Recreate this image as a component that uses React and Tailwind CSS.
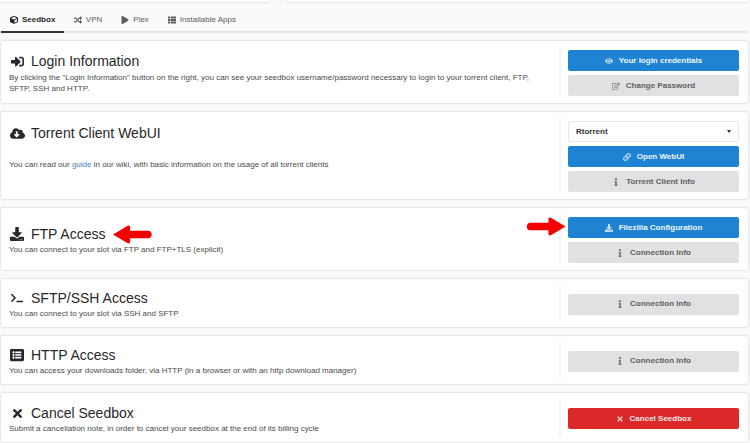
import {
  FaCube, FaRandom, FaPlay, FaThList, FaSignInAlt, FaCloudDownloadAlt, FaDownload,
  FaTerminal, FaListAlt, FaTimes, FaEye, FaRegEdit, FaLink, FaInfo,
} from 'react-icons/fa'

const tabs = [
  { label: 'Seedbox', Icon: FaCube, active: true },
  { label: 'VPN', Icon: FaRandom },
  { label: 'Plex', Icon: FaPlay },
  { label: 'Installable Apps', Icon: FaThList },
]

function Arrow({ className, flip }) {
  return (
    <svg viewBox="0 0 42 20" className={className}>
      <path
        d={flip
          ? 'M41 10 L26 1 C24 0 23 1 23 3 L23 6 L4 6 C-1 6 -1 14 4 14 L23 14 L23 17 C23 19 24 20 26 19 Z'
          : 'M1 10 L16 1 C18 0 19 1 19 3 L19 6 L38 6 C43 6 43 14 38 14 L19 14 L19 17 C19 19 18 20 16 19 Z'}
        fill="#f50000"
      />
    </svg>
  )
}

function Btn({ color = 'gray', Icon, children }) {
  const colors = {
    blue: 'bg-[#1f83d3] text-[#eef6fc]',
    gray: 'bg-[#e0e1e2] text-[#5f5f5f]',
    red: 'bg-[#db2828] text-[#fbeaea]',
  }
  return (
    <button className={`h-[21px] w-full flex items-center justify-center rounded-[2px] text-[8px] font-bold ${colors[color]}`}>
      <Icon className="mr-[6px] text-[8px] opacity-80" />
      {children}
    </button>
  )
}

function Card({ Icon, iconClass = '', title, height, children, actions, titleClass = '' }) {
  return (
    <div className={`flex rounded-[2px] bg-white shadow-[0_0_2px_rgba(34,36,38,0.3)] ${height}`}>
      <div className="w-[558px] shrink-0 pl-[8px] pr-[8px]">
        <div className={`flex items-center text-[#282828] ${titleClass}`}>
          <span className="w-[16px] flex shrink-0 justify-center mr-[6px]">
            <Icon className={iconClass} />
          </span>
          <h2 className="text-[14px] leading-[18px] font-normal">{title}</h2>
        </div>
        {children}
      </div>
      <div className="flex-1 my-[6px] border-l-2 border-[#f4f4f4] pt-[2px] pl-[7px] pr-[9px] flex flex-col justify-center gap-[4px]">
        {actions}
      </div>
    </div>
  )
}

const desc = 'text-[8px] leading-[11px] text-[#4a4a4a]'

export default function App() {
  return (
    <div className="h-[443px] w-[750px] overflow-hidden bg-[#fafafa] font-['Liberation_Sans',sans-serif] relative">
      {/* top of the section above */}
      <div className="flex h-[2px] pr-[2px] gap-[17px]">
        <div className="w-[270px] bg-white shadow-[0_0_2px_rgba(34,36,38,0.3)]" />
        <div className="flex-1 bg-white shadow-[0_0_2px_rgba(34,36,38,0.3)]" />
      </div>

      <div className="mt-[6px] mr-[2px] pl-[1px] flex h-[25px] border-b-2 border-[#e6e6e6]">
        {tabs.map(({ label, Icon, active }) => (
          <div
            key={label}
            className={`flex items-center text-[8px] ${
              active
                ? 'pl-[9px] pr-[9px] font-bold text-[#282828] border-b-2 border-[#333] h-[25px]'
                : 'px-[9.5px] text-[#5c5c5c] h-[23px]'
            }`}
          >
            <Icon className="mr-[4px] text-[8px]" />
            {label}
          </div>
        ))}
      </div>

      <div className="mt-[8px] ml-[1px] mr-[2px] flex flex-col gap-[9px]">
        <Card
          Icon={FaSignInAlt}
          iconClass="text-[13px]"
          title="Login Information"
          height="h-[62px]"
          titleClass="pt-[11px]"
          actions={
            <>
              <Btn color="blue" Icon={FaEye}>Your login credentials</Btn>
              <Btn Icon={FaRegEdit}>Change Password</Btn>
            </>
          }
        >
          <p className={`${desc} mt-[2px]`}>
            By clicking the "Login Information" button on the right, you can see your seedbox username/password necessary to login to your torrent client, FTP, SFTP, SSH and HTTP.
          </p>
        </Card>

        <Card
          Icon={FaCloudDownloadAlt}
          iconClass="text-[15px]"
          title="Torrent Client WebUI"
          height="h-[87px]"
          titleClass="pt-[12px]"
          actions={
            <>
              <div className="h-[21px] flex items-center justify-between rounded-[2px] border border-[#e8e8e8] pl-[7px] pr-[7px] text-[8px] font-bold text-[#333]">
                Rtorrent
                <span className="border-x-[2.5px] border-t-[3px] border-x-transparent border-t-[#333]" />
              </div>
              <Btn color="blue" Icon={FaLink}>Open WebUI</Btn>
              <Btn Icon={FaInfo}>Torrent Client Info</Btn>
            </>
          }
        >
          <p className={`${desc} mt-[17px]`}>
            You can read our <a className="text-[#4183c4]">guide</a> in our wiki, with basic information on the usage of all torrent clients
          </p>
        </Card>

        <Card
          Icon={FaDownload}
          iconClass="text-[14px]"
          title="FTP Access"
          height="h-[62px]"
          titleClass="pt-[17px]"
          actions={
            <>
              <Btn color="blue" Icon={FaDownload}>Filezilla Configuration</Btn>
              <Btn Icon={FaInfo}>Connection Info</Btn>
            </>
          }
        >
          <p className={`${desc} mt-[1px]`}>You can connect to your slot via FTP and FTP+TLS (explicit)</p>
        </Card>

        <Card
          Icon={FaTerminal}
          iconClass="text-[12px]"
          title="SFTP/SSH Access"
          height="h-[48px]"
          titleClass="pt-[10px]"
          actions={<Btn Icon={FaInfo}>Connection Info</Btn>}
        >
          <p className={`${desc} mt-[1px]`}>You can connect to your slot via SSH and SFTP</p>
        </Card>

        <Card
          Icon={FaListAlt}
          iconClass="text-[14px]"
          title="HTTP Access"
          height="h-[48px]"
          titleClass="pt-[10px]"
          actions={<Btn Icon={FaInfo}>Connection Info</Btn>}
        >
          <p className={`${desc} mt-[1px]`}>You can access your downloads folder, via HTTP (in a browser or with an http download manager)</p>
        </Card>

        <Card
          Icon={FaTimes}
          iconClass="text-[13px]"
          title="Cancel Seedbox"
          height="h-[49px]"
          titleClass="pt-[11px]"
          actions={<Btn color="red" Icon={FaTimes}>Cancel Seedbox</Btn>}
        >
          <p className={`${desc} mt-[1px]`}>Submit a cancellation note, in order to cancel your seedbox at the end of its billing cycle</p>
        </Card>
      </div>

      {/* annotation arrows */}
      <Arrow className="absolute left-[112px] top-[225px] w-[40px] h-[19px]" />
      <Arrow flip className="absolute left-[525px] top-[217px] w-[43px] h-[19px]" />
    </div>
  )
}
